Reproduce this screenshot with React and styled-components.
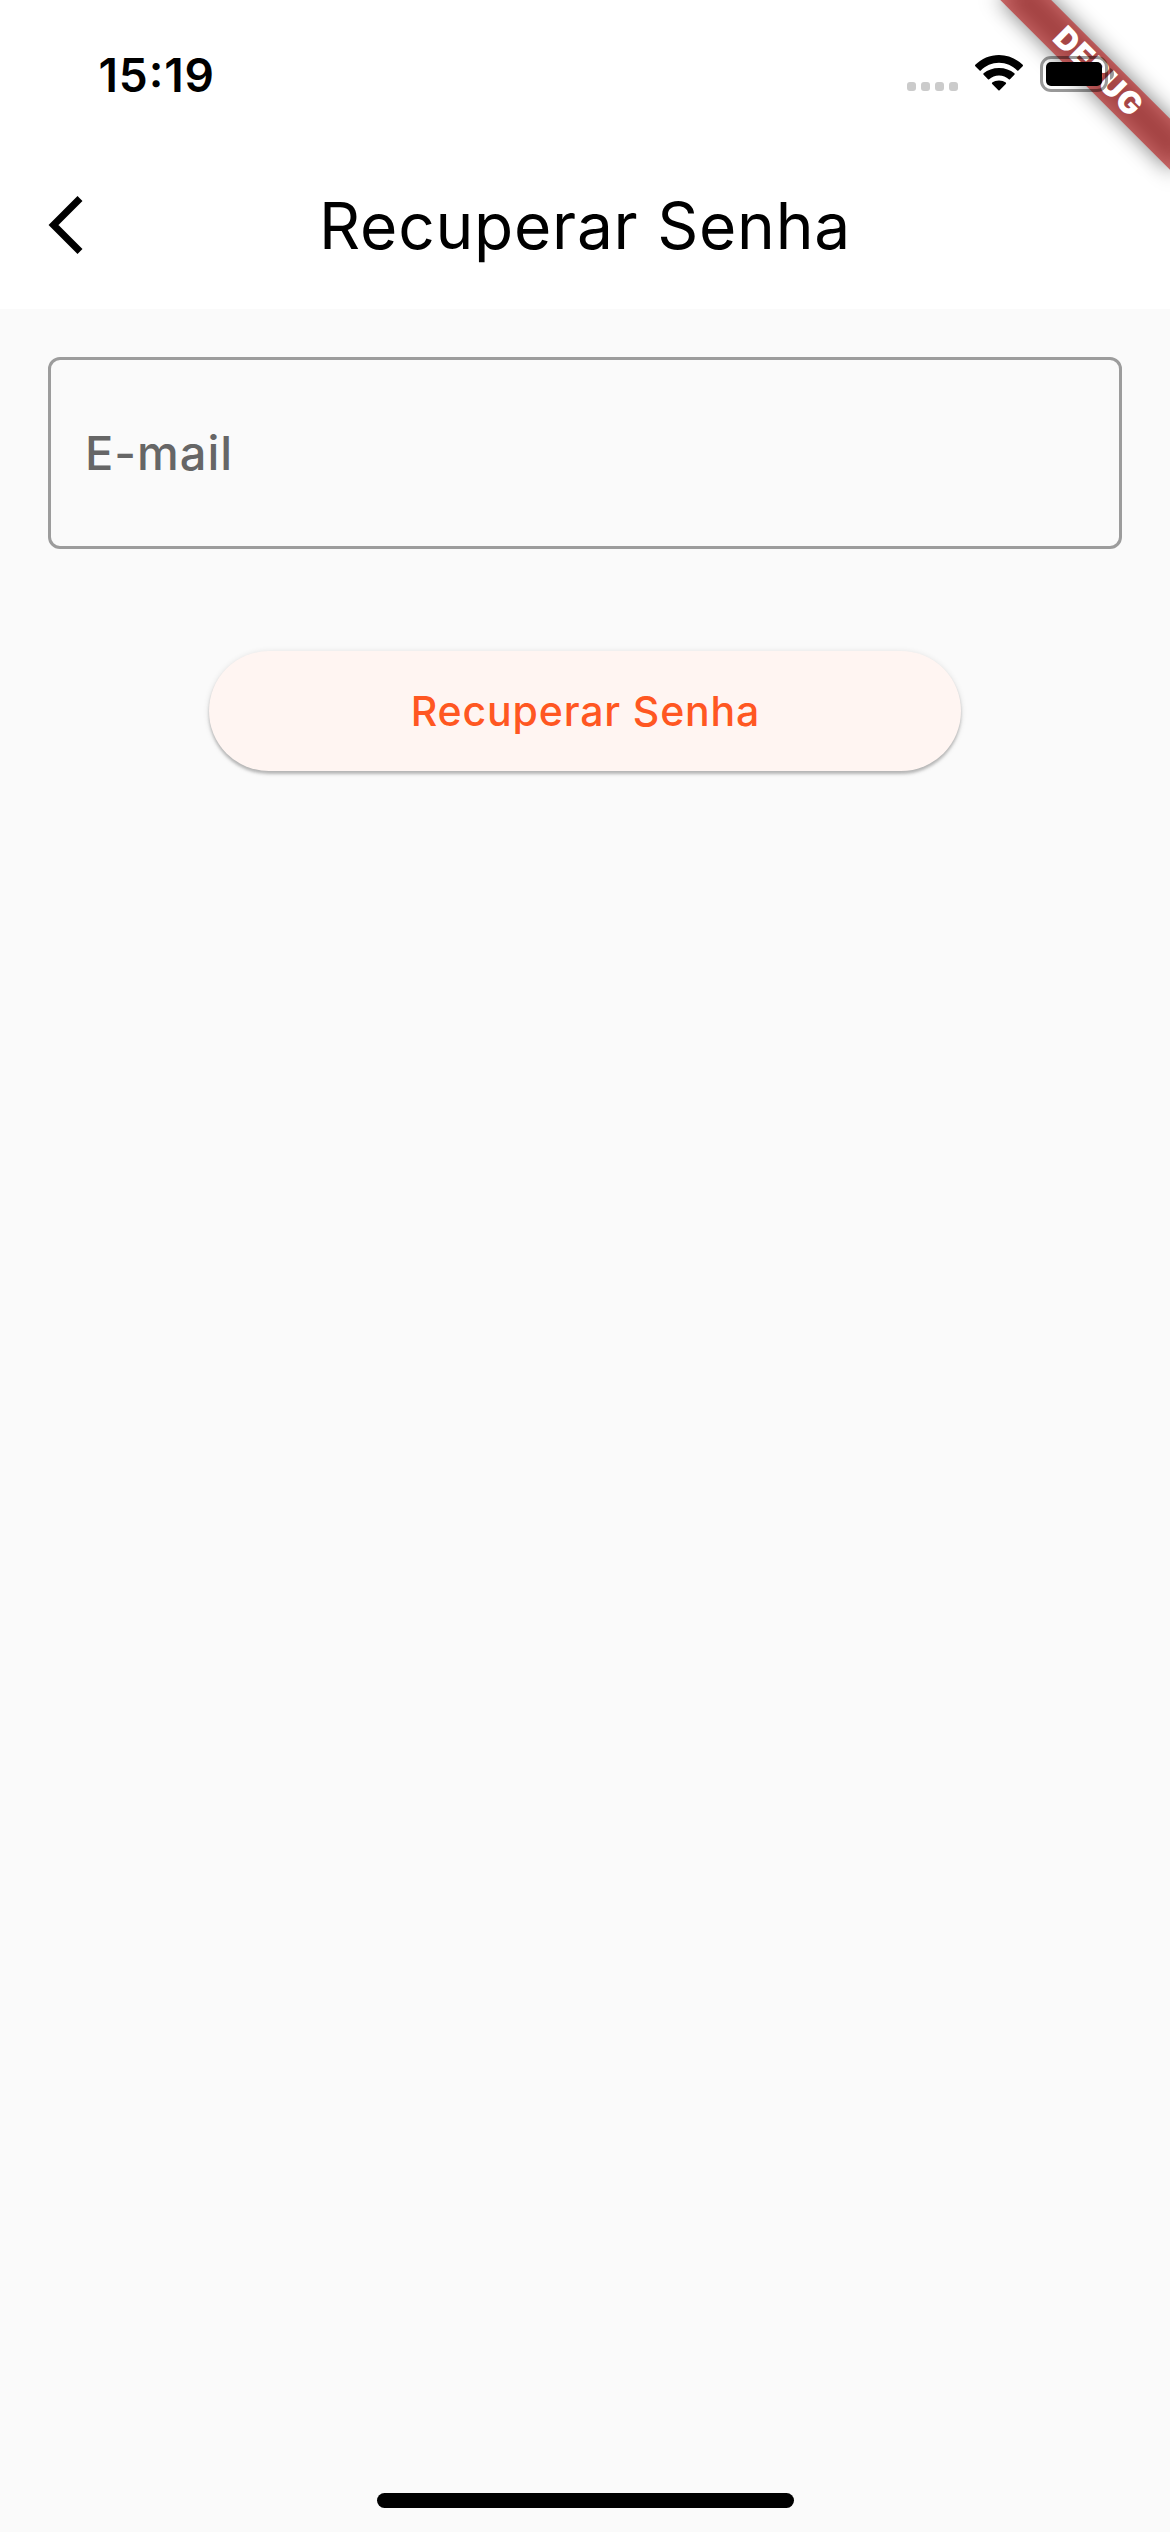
import React from "react";
import styled, { createGlobalStyle } from "styled-components";

const GlobalStyle = createGlobalStyle`
  * { box-sizing: border-box; }
  body { margin: 0; background: #fafafa; }
`;

const Screen = styled.div`
  position: relative;
  display: flex;
  flex-direction: column;
  width: 1170px;
  height: 2532px;
  overflow: hidden;
  background: #fafafa;
  color: #000;
  font-family: Inter, Roboto, "Liberation Sans", sans-serif;
`;

const Header = styled.header`
  background: #fff;
  height: 309px;
`;

const StatusBar = styled.div`
  display: flex;
  justify-content: space-between;
  align-items: center;
  height: 141px;
  padding: 7px 54px 0 98.5px;
`;

const Clock = styled.time`
  padding-top: 1px;
  font-size: 46px;
  font-weight: 600;
  font-feature-settings: "case";
  line-height: 54px;
  letter-spacing: 0.9px;
`;

const StatusIcons = styled.div`
  position: relative;
  z-index: 2;
  display: flex;
  align-items: flex-start;
  height: 36px;
`;

const Signal = styled.div`
  display: flex;
  gap: 5px;
  padding-top: 26px;
  margin-right: 17px;
`;

const SignalDot = styled.i`
  width: 9px;
  height: 9px;
  border-radius: 3px;
  background: #cbcbcb;
`;

const WifiIcon = styled.svg`
  width: 48px;
  height: 36px;
  margin: -1px 17px 0 0;
`;

const BatteryIcon = styled.svg`
  width: 76px;
  height: 36px;
`;

const NavBar = styled.nav`
  display: grid;
  grid-template-columns: 168px 1fr 168px;
  align-items: center;
  height: 168px;
`;

const BackButton = styled.button`
  display: flex;
  align-items: center;
  height: 144px;
  padding: 0 0 0 48px;
  border: 0;
  background: none;
`;

const Title = styled.h1`
  margin: 0;
  padding-top: 2px;
  text-align: center;
  font-size: 64px;
  font-weight: 400;
  line-height: 78px;
  letter-spacing: 0.75px;
  white-space: nowrap;
`;

const Form = styled.main`
  display: flex;
  flex: 1;
  flex-direction: column;
  align-items: center;
  padding: 48px 48px 0;
`;

const Field = styled.label`
  display: flex;
  align-items: center;
  width: 100%;
  height: 192px;
  padding: 0 34px;
  border: 3px solid #9c9c9c;
  border-radius: 12px;
  color: #666;
  font-size: 47px;
  font-weight: 450;
  line-height: 58px;
  letter-spacing: 1px;
`;

const SubmitButton = styled.button`
  width: 752px;
  height: 120px;
  margin-top: 102px;
  padding: 0 0 0 1px;
  border: 0;
  border-radius: 60px;
  background: #fff5f2;
  color: #ff5722;
  box-shadow: 0 3px 3px rgba(0, 0, 0, 0.22), 0 1px 6px rgba(0, 0, 0, 0.12);
  font-family: inherit;
  font-size: 41px;
  font-weight: 500;
  line-height: 50px;
  letter-spacing: 0.85px;
`;

const HomeArea = styled.footer`
  display: flex;
  justify-content: center;
  padding-bottom: 24px;
`;

const HomeIndicator = styled.div`
  width: 417px;
  height: 15px;
  border-radius: 8px;
  background: #000;
`;

const DebugBanner = styled.div`
  position: absolute;
  top: 0;
  left: 1170px;
  z-index: 1;
  width: 0;
  height: 0;
  transform: rotate(45deg);
`;

const BannerShadow = styled.div`
  position: absolute;
  top: 84px;
  left: -120px;
  width: 240px;
  height: 36px;
  background: rgba(0, 0, 0, 0.5);
  filter: blur(10.9px);
`;

const BannerStrip = styled.div`
  position: absolute;
  top: 84px;
  left: -120px;
  width: 240px;
  height: 36px;
  background: rgba(183, 28, 28, 0.627);
  color: #fff;
  text-align: center;
  font-size: 31px;
  font-weight: 900;
  line-height: 34px;
  letter-spacing: 0.8px;
`;

export default function App() {
  return (
    <>
      <GlobalStyle />
      <Screen>
        <Header>
          <StatusBar>
            <Clock>15:19</Clock>
            <StatusIcons>
              <Signal>
                <SignalDot /><SignalDot /><SignalDot /><SignalDot />
              </Signal>
              <WifiIcon viewBox="0 0 48 36">
                <path d="M.3 9.800C6.500 3.700 15 0 24 0s17.500 3.700 23.700 9.800q.600.700 0 1.400L43.400 15.400q-.600.500-1.200 0C37.500 10.700 31 7.700 24 7.700S10.500 10.700 5.800 15.400q-.6.500-1.200 0L.3 11.200q-.6-.7 0-1.400z" />
                <path d="M8.600 18.300C12.700 14.900 18 12.900 24 12.900s11.300 2 15.400 5.400q.700.700 0 1.400L35 24.200q-.6.500-1.200 0C31.200 21.900 27.900 20.500 24 20.500s-7.200 1.400-9.800 3.700q-.6.500-1.200 0L8.600 19.700q-.7-.7 0-1.400z" />
                <path d="M17.200 27.500C19 26.200 21.400 25.500 24 25.500s5 .7 6.800 2q.7.700 0 1.400L24.600 35.300q-.6.500-1.200 0L17.200 28.900q-.7-.7 0-1.400z" />
              </WifiIcon>
              <BatteryIcon viewBox="0 0 76 36">
                <rect x="1.500" y="1.500" width="65" height="33" rx="9.500" fill="none" stroke="#000" strokeOpacity=".4" strokeWidth="3" />
                <rect x="6" y="6" width="56" height="24" rx="5" />
                <path d="M70 12c2.500 1 4 3.300 4 6s-1.500 5-4 6z" fillOpacity=".4" />
              </BatteryIcon>
            </StatusIcons>
          </StatusBar>
          <NavBar>
            <BackButton aria-label="Voltar">
              <svg width="36" height="60" viewBox="0 0 36 60">
                <path d="M32 3.500L5.500 30L32 56.500" fill="none" stroke="#000" strokeWidth="7" />
              </svg>
            </BackButton>
            <Title>Recuperar Senha</Title>
          </NavBar>
        </Header>
        <Form>
          <Field>E-mail</Field>
          <SubmitButton>Recuperar Senha</SubmitButton>
        </Form>
        <HomeArea><HomeIndicator /></HomeArea>
        <DebugBanner>
          <BannerShadow />
          <BannerStrip>DEBUG</BannerStrip>
        </DebugBanner>
      </Screen>
    </>
  );
}
